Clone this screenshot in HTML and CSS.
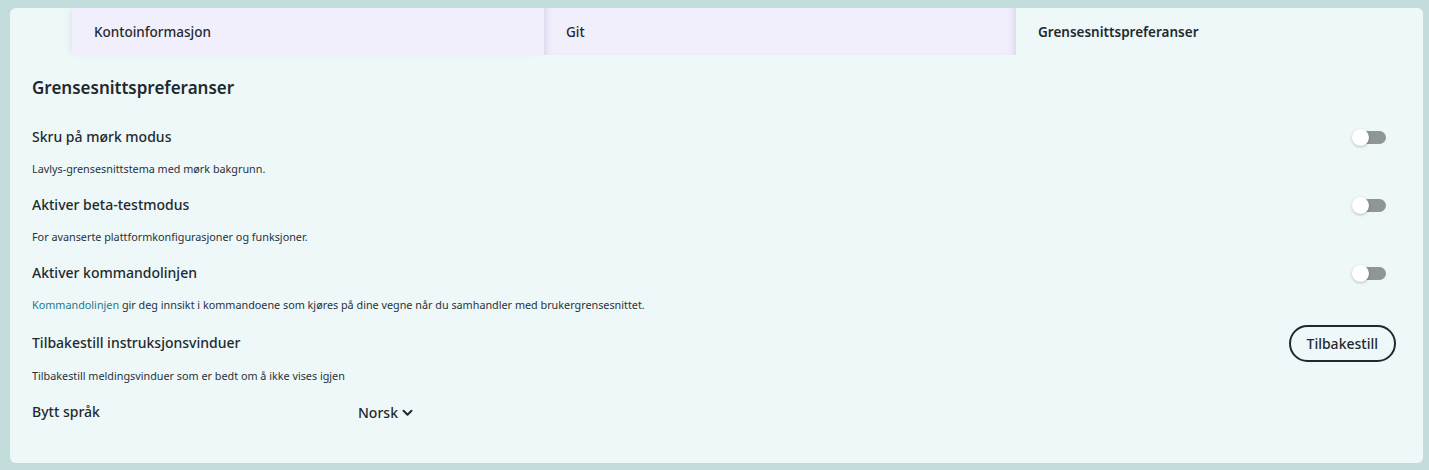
FILE: index.html
```html
<!DOCTYPE html>
<html lang="no">
<head>
<meta charset="utf-8">
<title>Grensesnittspreferanser</title>
<link rel="stylesheet" href="styles.css">
</head>
<body>
<div class="card">
  <nav class="tabs">
    <div class="tab tab-first">Kontoinformasjon</div>
    <div class="tab tab-mid">Git</div>
    <div class="tab tab-active">Grensesnittspreferanser</div>
  </nav>
  <section class="content">
    <h1 class="heading">Grensesnittspreferanser</h1>

    <div class="setting">
      <div class="row">
        <span class="label">Skru på mørk modus</span>
        <span class="toggle"><span class="knob"></span></span>
      </div>
      <p class="desc">Lavlys-grensesnittstema med mørk bakgrunn.</p>
    </div>

    <div class="setting">
      <div class="row">
        <span class="label">Aktiver beta-testmodus</span>
        <span class="toggle"><span class="knob"></span></span>
      </div>
      <p class="desc">For avanserte plattformkonfigurasjoner og funksjoner.</p>
    </div>

    <div class="setting">
      <div class="row">
        <span class="label">Aktiver kommandolinjen</span>
        <span class="toggle"><span class="knob"></span></span>
      </div>
      <p class="desc"><a class="link">Kommandolinjen</a> gir deg innsikt i kommandoene som kjøres på dine vegne når du samhandler med brukergrensesnittet.</p>
    </div>

    <div class="setting setting-btn">
      <div class="row">
        <span class="label">Tilbakestill instruksjonsvinduer</span>
        <button class="btn">Tilbakestill</button>
      </div>
      <p class="desc desc-btn">Tilbakestill meldingsvinduer som er bedt om å ikke vises igjen</p>
    </div>

    <div class="lang">
      <span class="label lang-label">Bytt språk</span>
      <span class="select">Norsk
        <svg class="chev" width="11" height="8" viewBox="0 0 11 8"><path d="M1.5 1.8 L5.5 5.8 L9.5 1.8" fill="none" stroke="#1e2a2d" stroke-width="2" stroke-linecap="round" stroke-linejoin="round"/></svg>
      </span>
    </div>
  </section>
</div>
</body>
</html>
```
FILE: styles.css
```css
* { box-sizing: border-box; }
html, body { margin: 0; padding: 0; }
body {
  background: #c3dddc;
  font-family: "Noto Sans", "Open Sans", sans-serif;
  color: #1e2a2d;
  padding: 8px 6px 7px 10px;
  height: 470px;
}
.card {
  background: #eff8f9;
  border-radius: 6px;
  height: 455px;
  overflow: hidden;
}
.tabs {
  display: grid;
  grid-template-columns: 472px 472px 1fr;
  margin-left: 62px;
  height: 47px;
}
.tab {
  display: flex;
  align-items: center;
  padding-left: 22px;
  font-size: 13.5px;
  font-weight: 500;
  color: #1f2a30;
  background: #f2effd;
  position: relative;
}
.tab-first {
  box-shadow: -4px 0 7px -2px rgba(90, 80, 140, 0.12);
  z-index: 1;
}
.tab-mid {
  box-shadow: inset 8px 0 7px -6px rgba(90, 80, 140, 0.16), inset -8px 0 7px -6px rgba(90, 80, 140, 0.16);
}
.tab-active {
  background: #eff8f9;
  font-weight: 600;
}
.content {
  padding: 21px 27px 0 22px;
}
.heading {
  margin: 0 0 27px;
  font-size: 17px;
  font-weight: 600;
  line-height: 24px;
}
.setting { margin-bottom: 19px; }
.setting-btn { margin-top: 21px; }
.row {
  display: flex;
  justify-content: space-between;
  align-items: center;
  height: 20px;
}
.label {
  font-size: 14px;
  font-weight: 500;
  line-height: 20px;
}
.desc {
  margin: 15px 0 0;
  font-size: 10.8px;
  line-height: 14px;
  color: #27323a;
}
.link { color: #22788a; }
.toggle {
  position: relative;
  width: 32px;
  height: 13px;
  margin-right: 10px;
  border-radius: 7px;
  background: #8f9695;
}
.knob {
  position: absolute;
  left: -2px;
  top: -2px;
  width: 17px;
  height: 17px;
  border-radius: 50%;
  background: #ffffff;
  box-shadow: 0 1px 3px rgba(0, 0, 0, 0.25);
}
.btn {
  font-family: inherit;
  font-size: 14px;
  font-weight: 500;
  color: #1e2a2d;
  background: transparent;
  border: 2px solid #1e2a2d;
  border-radius: 19px;
  height: 37px;
  padding: 0 16px;
  margin-right: 0;
}
.desc-btn { margin-top: 16px; }
.lang {
  display: flex;
  align-items: center;
}
.lang-label { width: 326px; }
.select {
  display: inline-flex;
  align-items: center;
  gap: 4px;
  font-size: 14px;
  font-weight: 500;
}
.chev { margin-top: 1px; }
```
